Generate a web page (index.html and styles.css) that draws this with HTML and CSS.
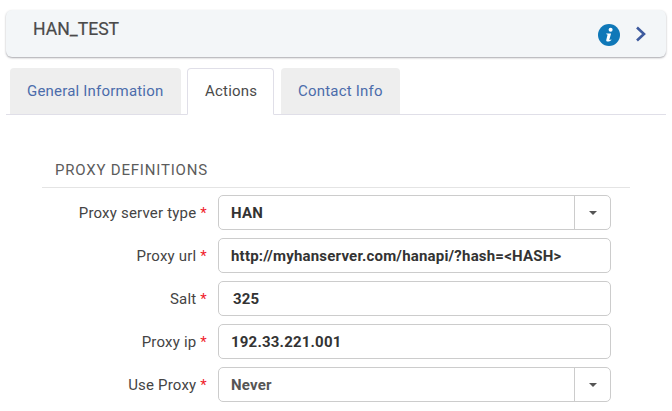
FILE: index.html
```html
<!DOCTYPE html>
<html lang="en">
<head>
<meta charset="utf-8">
<title>HAN_TEST</title>
<link rel="stylesheet" href="styles.css">
</head>
<body>
<header class="card">
  <h1 class="card-title">HAN_TEST</h1>
  <div class="card-icons">
    <svg class="info" width="22" height="22" viewBox="0 0 22 22"><circle cx="11" cy="11" r="11" fill="#0f78b8"/><circle cx="12.6" cy="5.8" r="2" fill="#fff"/><path d="M8.2 9.4h4.9l-1.7 6.1c-.1.5.3.6.7.4l1-.6.3.7c-1.200 1-2.400 1.600-3.700 1.600-1.200 0-1.700-.7-1.400-1.800l1.200-4.800c.1-.5-.2-.7-1.200-.8z" fill="#fff"/></svg>
    <svg class="chev" width="12" height="16" viewBox="0 0 12 16"><path d="M2 1.500 9 8l-7 6.500" fill="none" stroke="#3d5a9e" stroke-width="2.600"/></svg>
  </div>
</header>
<nav class="tabs">
  <a class="tab tab-first">General Information</a>
  <a class="tab tab-active">Actions</a>
  <a class="tab tab-last">Contact Info</a>
</nav>
<section class="section">
  <h2 class="section-title">PROXY DEFINITIONS</h2>
  <div class="form">
    <div class="row">
      <label class="label">Proxy server type <span class="req">*</span></label>
      <div class="field"><span class="value">HAN</span><span class="caret-box"><i class="caret"></i></span></div>
    </div>
    <div class="row">
      <label class="label">Proxy url <span class="req">*</span></label>
      <div class="field"><span class="value">http://myhanserver.com/hanapi/?hash=&lt;HASH&gt;</span></div>
    </div>
    <div class="row">
      <label class="label">Salt <span class="req">*</span></label>
      <div class="field"><span class="value value-salt">325</span></div>
    </div>
    <div class="row">
      <label class="label">Proxy ip <span class="req">*</span></label>
      <div class="field"><span class="value">192.33.221.001</span></div>
    </div>
    <div class="row">
      <label class="label">Use Proxy <span class="req">*</span></label>
      <div class="field"><span class="value value-muted">Never</span><span class="caret-box"><i class="caret"></i></span></div>
    </div>
  </div>
</section>
</body>
</html>
```

FILE: styles.css
```css
* { box-sizing: border-box; }
html, body { height: 100%; }
body {
  margin: 0;
  padding: 10px 6px 0;
  background: #fff;
  font-family: Roboto, "Liberation Sans", sans-serif;
  overflow: hidden;
}
.card {
  height: 47px;
  background: #f3f6f8;
  border-radius: 6px;
  box-shadow: 0 1px 2px 0 rgba(60, 60, 70, .45);
  display: flex;
  justify-content: space-between;
  padding: 0 19px 0 27px;
}
.card-title {
  margin: 9px 0 0;
  font-size: 17.600px;
  line-height: 20px;
  font-weight: 400;
  color: #4a4a4a;
  -webkit-text-stroke: .2px #4a4a4a;
}
.card-icons {
  display: flex;
  align-items: center;
  gap: 15px;
  padding-top: 3px;
}
.chev { margin-top: -2px; }
.tabs {
  margin-top: 11px;
  padding-left: 4px;
  height: 47px;
  display: flex;
  gap: 6px;
  border-bottom: 1px solid #e0dfe8;
}
.tab {
  height: 46px;
  padding: 0 17px;
  background: #eeeeee;
  border-radius: 4px 4px 0 0;
  font-size: 15px;
  line-height: 47px;
  color: #4b6cab;
  letter-spacing: .2px;
}
.tab-first { width: 171px; }
.tab-active {
  width: 87px;
  height: 47px;
  background: #fff;
  color: #4a4a4a;
  border: 1px solid #e0dfe8;
  border-bottom-color: #fff;
  line-height: 45px;
}
.tab-last { width: 119px; margin-left: 1px; }
.section { margin: 0 36px; }
.section-title {
  margin: 46px 0 0;
  padding: 0 0 8px 13px;
  height: 27px;
  font-size: 15px;
  line-height: 18px;
  font-weight: 400;
  letter-spacing: .8px;
  color: #5c5c5c;
  border-bottom: 1px solid #e4e4e4;
}
.form {
  margin-top: 7px;
  display: flex;
  flex-direction: column;
  gap: 8px;
}
.row {
  display: flex;
  align-items: center;
  gap: 11px;
}
.label {
  width: 165px;
  text-align: right;
  font-size: 15px;
  letter-spacing: .2px;
  color: #444;
  white-space: nowrap;
}
.req { color: #f01c2c; }
.field {
  width: 393px;
  height: 35px;
  border: 1px solid #cccccc;
  border-radius: 5px;
  display: flex;
  align-items: center;
  justify-content: space-between;
  background: #fff;
}
.value {
  padding-left: 12px;
  font-size: 15px;
  font-weight: 700;
  color: #333;
  letter-spacing: .2px;
}
.value-salt { padding-left: 14px; }
.value-muted { color: #555; }
.caret-box {
  width: 36px;
  height: 100%;
  border-left: 1px solid #cccccc;
  display: flex;
  align-items: center;
  justify-content: center;
}
.caret {
  width: 0;
  height: 0;
  border-left: 4px solid transparent;
  border-right: 4px solid transparent;
  border-top: 4px solid #555;
}
```
